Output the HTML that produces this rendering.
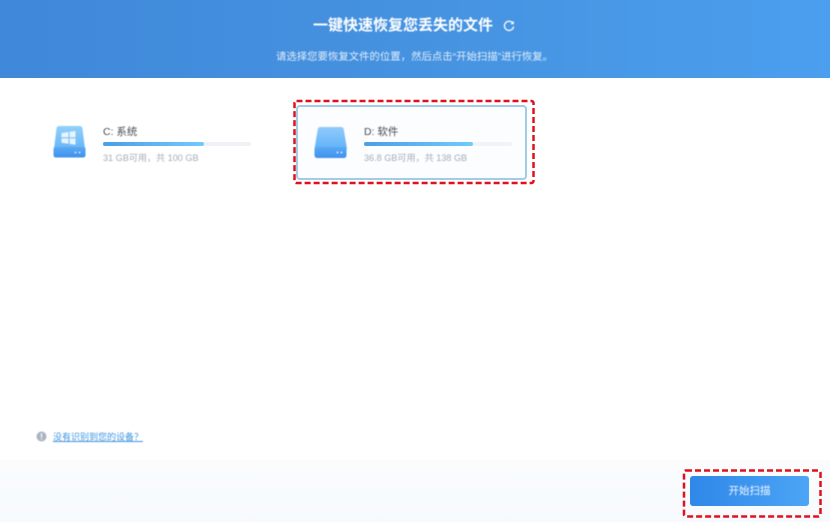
<!DOCTYPE html>
<html lang="zh">
<head>
<meta charset="utf-8">
<style>
html,body{margin:0;padding:0;width:830px;height:522px;overflow:hidden;background:#fff;font-family:"Liberation Sans","Noto Sans CJK SC",sans-serif}
.a{position:absolute;white-space:nowrap}
.blur{filter:blur(.4px)}
.track{position:absolute;height:4px;background:#eef1f5;border-radius:2px}
.fill{position:absolute;left:0;top:0;height:4px;border-radius:2px;background:linear-gradient(90deg,#4a9fe6,#70cafc)}
</style>
</head>
<body>
<div class="a" style="left:0;top:0;width:830px;height:78px;background:linear-gradient(90deg,#4088da 0%,#4592e0 50%,#4b9fee 100%)"></div>
<div class="a blur" style="left:313px;top:16px;font-size:15px;line-height:20px;font-weight:700;color:#fff">一键快速恢复您丢失的文件</div>
<svg class="a blur" style="left:502px;top:19px" width="14" height="14" viewBox="0 0 14 14" fill="none">
<path d="M10.800 4.200A4.600 4.600 0 1 0 11.500 8" stroke="#fff" stroke-width="1.300" stroke-linecap="round"/>
<path d="M11.800 1.900v3.400H8.500z" fill="#fff"/>
</svg>
<div class="a blur" style="left:276px;top:50.500px;font-size:10.400px;line-height:14px;color:#e2eefb">请选择您要恢复文件的位置，然后点击“开始扫描”进行恢复。</div>

<!-- C drive -->
<svg class="a blur" style="left:52px;top:125px" width="35" height="35" viewBox="0 0 35 35">
<defs>
<linearGradient id="g1" x1="0" y1="0" x2="0" y2="1"><stop offset="0" stop-color="#93d0fc"/><stop offset="1" stop-color="#66b6f8"/></linearGradient>
<linearGradient id="g2" x1="0" y1="0" x2="0" y2="1"><stop offset="0" stop-color="#5aa9f5"/><stop offset="1" stop-color="#3f90ec"/></linearGradient>
</defs>
<path d="M4.500 3.500Q4.800 1 7.500 1H27.500Q30.200 1 30.500 3.500L33 24H2z" fill="url(#g1)"/>
<path d="M1.500 24Q1.500 22 3.500 22H31.500Q33.500 22 33.500 24V30Q33.500 32.500 31 32.500H4Q1.500 32.500 1.500 30z" fill="url(#g2)"/>
<path d="M9.500 8L16.500 7V12.300H9.500zM17.600 6.800L23.500 6V12.300H17.600zM9.500 13.400H16.500V18.800L9.500 17.800zM17.600 13.400H23.500V19.700L17.600 19z" fill="#e8f4fe"/>
<circle cx="23.500" cy="27.500" r="1" fill="#cfe6fc"/><circle cx="27.500" cy="27.500" r="1" fill="#cfe6fc"/>
</svg>
<div class="a blur" style="left:103px;top:124.500px;font-size:10.500px;line-height:14px;color:#484d54">C: 系统</div>
<div class="track" style="left:103px;top:142px;width:148px"><div class="fill" style="width:101px"></div></div>
<div class="a blur" style="left:103px;top:150.500px;font-size:9.100px;line-height:14px;color:#a4adb8">31 GB可用，共 100 GB</div>

<!-- D card -->
<div class="a" style="left:296px;top:105px;width:227px;height:71px;border:2px solid #a2cbe6;border-radius:4px;background:#fcfdff"></div>
<svg class="a blur" style="left:313px;top:126px" width="35" height="33" viewBox="0 0 35 33">
<defs>
<linearGradient id="g3" x1="0" y1="0" x2="0" y2="1"><stop offset="0" stop-color="#8fcbfc"/><stop offset="1" stop-color="#62b2f8"/></linearGradient>
</defs>
<path d="M4.800 3Q5.200 1 7.500 1H28Q30.300 1 30.700 3L34 23H1.500z" fill="url(#g3)"/>
<path d="M1.500 23Q1.500 21 3.500 21H31.500Q33.500 21 33.500 23V29Q33.500 32 30.500 32H4.500Q1.500 32 1.500 29z" fill="url(#g2)"/>
<circle cx="24.500" cy="26.500" r="1" fill="#d5e9fc"/><circle cx="28.500" cy="26.500" r="1" fill="#d5e9fc"/>
</svg>
<div class="a blur" style="left:364px;top:124.500px;font-size:10.500px;line-height:14px;color:#484d54">D: 软件</div>
<div class="track" style="left:364px;top:142px;width:148px;background:#f0f3f7"><div class="fill" style="width:109px"></div></div>
<div class="a blur" style="left:364px;top:150.500px;font-size:9.100px;line-height:14px;color:#a4adb8">36.8 GB可用，共 138 GB</div>

<!-- footer -->
<div class="a" style="left:0;top:460px;width:830px;height:62px;background:linear-gradient(180deg,#fafcfe,#f7fafd)"></div>
<svg class="a blur" style="left:36px;top:431px" width="11" height="11" viewBox="0 0 11 11">
<circle cx="5.500" cy="5.500" r="5" fill="#aab5c1"/>
<rect x="4.900" y="2.300" width="1.200" height="4" fill="#fff"/><rect x="4.900" y="7.200" width="1.200" height="1.300" fill="#fff"/>
</svg>
<div class="a blur" style="left:53px;top:429.500px;font-size:9px;line-height:14px;color:#3f95e0;text-decoration:underline">没有识别到您的设备？</div>

<div class="a" style="left:690px;top:476px;width:119px;height:30px;border-radius:3px;background:linear-gradient(90deg,#2f87e8,#4ca5f5)"></div>
<div class="a blur" style="left:690px;top:476px;width:119px;height:30px;line-height:31px;text-align:center;font-size:10.500px;color:#f0f7ff">开始扫描</div>

<!-- dashed highlights -->
<svg class="a" style="left:0;top:0" width="830" height="522" fill="none">
<rect x="294.500" y="101" width="239" height="82" rx="2" stroke="#e0101c" stroke-width="2.500" stroke-dasharray="6 3"/>
<rect x="684" y="470.500" width="136.500" height="46" rx="2" stroke="#e0101c" stroke-width="2.500" stroke-dasharray="6 3"/>
</svg>
</body>
</html>
